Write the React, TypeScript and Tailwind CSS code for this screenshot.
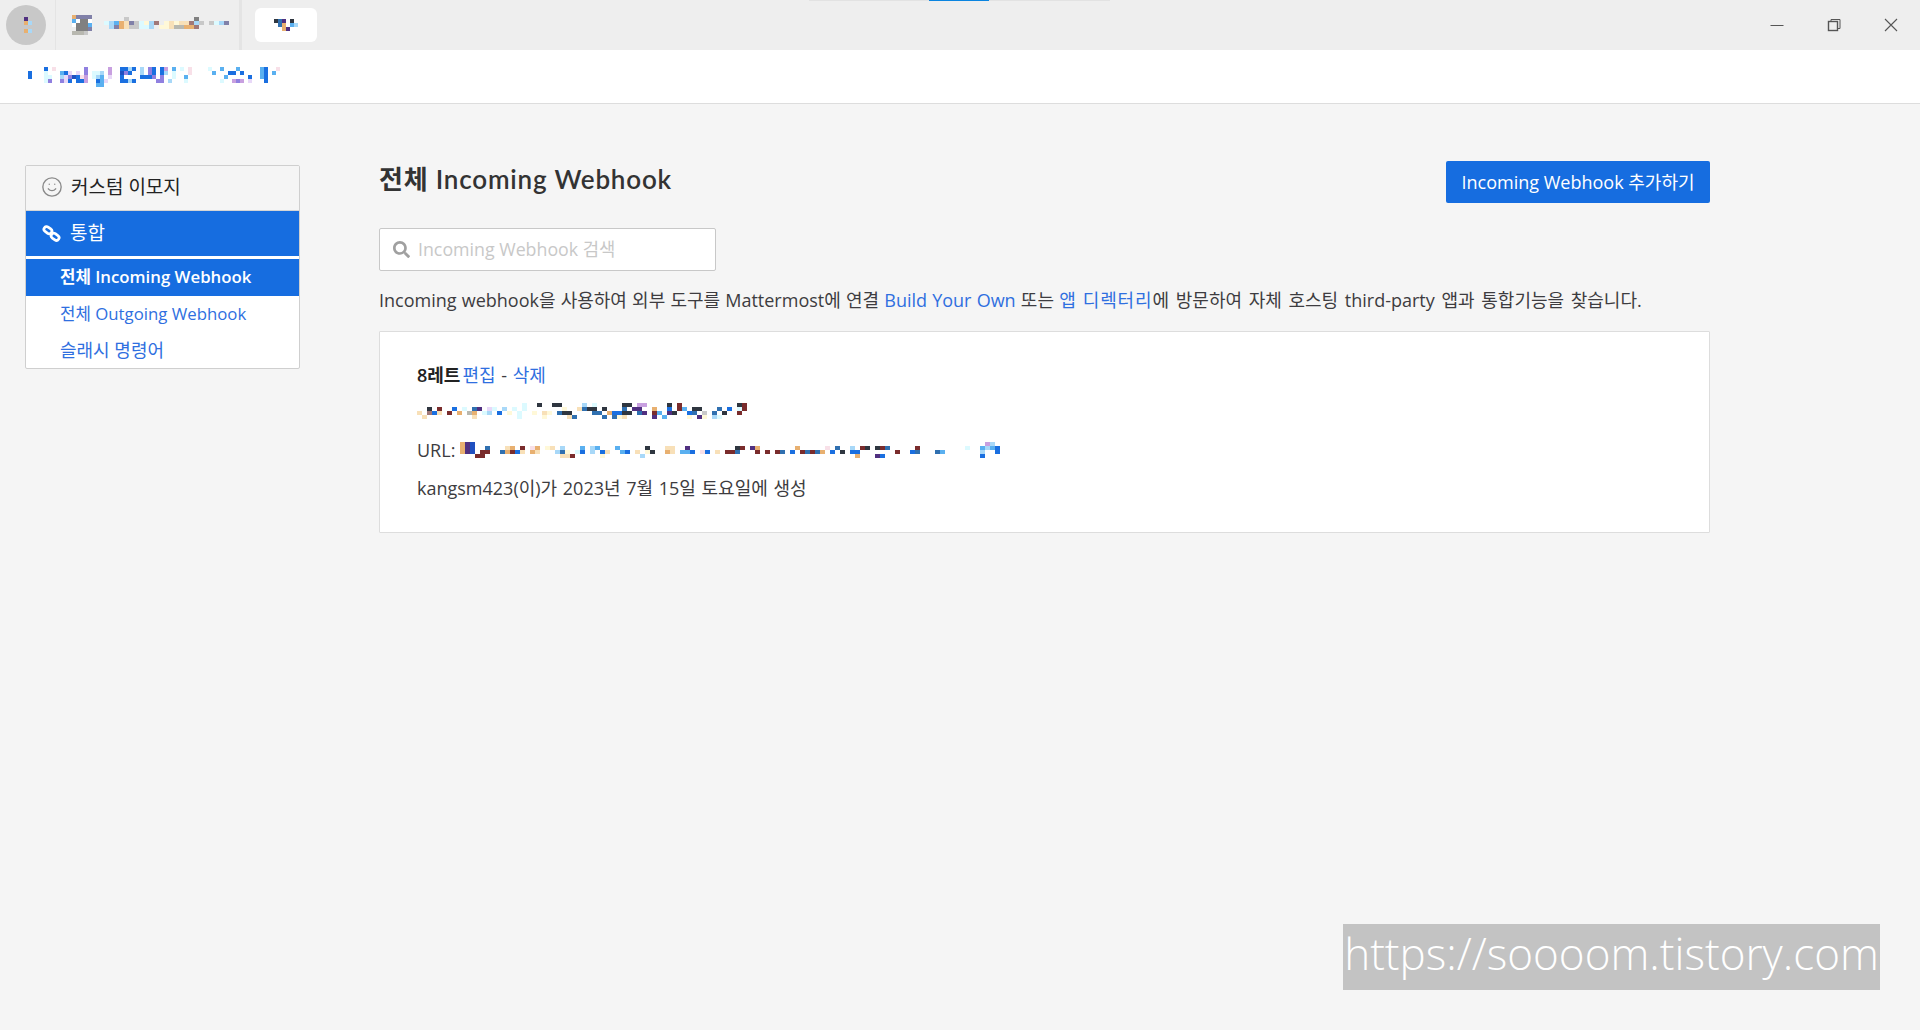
import { FaSearch } from 'react-icons/fa';
import { Smile } from 'lucide-react';

const COLORS: Record<string, string> = {
  b: '#1a6fe0', s: '#5ab0f0', p: '#c8a0e0', l: '#e8d8f8', c: '#dcfaff', k: '#f8e0e8', m: '#9080e0', d: '#2050c0',
  n: '#2f3640', r: '#7a2c2c', o: '#e8b070', y: '#fff8d8', t: '#3070b0', u: '#503080', a: '#a8d8f8', e: '#f8e0b8',
  g: '#c8c8c8', h: '#808080', i: '#b8b8b0', w: '#ffffff', q: '#a07878', v: '#8080a8',
};

// pixelated (blurred out) regions of the screenshot, one char per cell
function Mosaic({ rows, cell = 4, className }: { rows: string[]; cell?: number; className?: string }) {
  const width = Math.max(...rows.map(r => r.length)) * cell;
  return (
    <svg width={width} height={rows.length * 4} shapeRendering="crispEdges" className={className}>
      {rows.flatMap((row, y) =>
        row.split('').map((ch, x) =>
          COLORS[ch] ? <rect key={`${x}-${y}`} x={x * cell} y={y * 4} width={cell} height={4} fill={COLORS[ch]} /> : null
        )
      )}
    </svg>
  );
}

const HEADER_TEXT = [
  '....b.k.......m.....p..bbab.a.mb.bp.s.c.k....c..s...s.....sb..k',
  'b...c...sbl.l.m.cca.p..dmb..a.mb.ba.c...k.....s...bb.b....sb.s.',
  'b...cc..almdbkp.cas.l..b....bbbm.m..c..s.........s.....b..sb...',
  '....cm..mlb.bbp..bsl...bbab.....mm.a...c........c..pmp.l...b...',
  '.................ss.......................................',
];

const WEBHOOK_DESC = [
  '.....................c..n..nn....a.c.....nn.pp....n.r...........nr',
  '..n.r..b.c.tu.lc.a.c.c.......y..etnn.n...t.uu..o..b.rs.nn...t.b.cr',
  'e.qbe.r.o.io.ca.b.y.c..y.ey.tnn....tt.obbnn.tu.rs.un..bt.g.t.n..r',
  '.e.........e........c....y....et.....t.tye.....u.s....y.uy.ac.....',
];

const WEBHOOK_URL = [
  '.oud......................................................................................................pa..',
  '.oud..t...eo.r.ko.ye.a...s.as...s.....n...ee..u.........nr.uo.......o.....k.t..a.rn.nrt.....r.........c..sasb',
  '.oud.rr..torbe.oe...aty.cb.a.be..sb.e.yn..oe.ssb.kb.e.rrt...r.r.rt.b.rtrto.b.n.bb.......r..bt...ts.......a..b',
  '....rr...............eer.....y.......a..........................................o...ub...................b',
];

const SERVER_ICON = [
  '.ovvvv.',
  '.swhhw.',
  '.whhhs.',
  '..hhhv.',
  '.iiig..',
];

const SERVER_NAME = [
  '....g.............h...',
  'casoevgcyaq.yeyeeqag.gcav',
  '.avoeggcca.yyeiiooq.',
  '......................',
];

export default function App() {
  return (
    <div className="relative flex h-[1030px] w-[1920px] flex-col overflow-hidden bg-[#f5f5f5] font-['Open_Sans','Noto_Sans_CJK_KR',sans-serif] text-[18px] text-[#3d3c40]">
      {/* Window title bar */}
      <div className="relative flex h-[50px] shrink-0 items-center bg-[#eeeeee]">
        {/* loading strip */}
        <div className="absolute left-[809px] top-0 h-px w-[301px] bg-[#e2e2e2]" />
        <div className="absolute left-[929px] top-0 h-px w-[60px] bg-[#0a84e0]" />

        <div className="ml-[6px] flex h-[40px] w-[40px] items-center justify-center rounded-full bg-[#c8c8c8]">
          <Mosaic rows={['.u.', '.oa', '...', '.oa']} />
        </div>
        <div className="ml-[9px] h-full w-px bg-[#e4e4e4]" />
        <Mosaic rows={SERVER_ICON} className="ml-[12px]" />
        <Mosaic rows={SERVER_NAME} cell={5} className="ml-[8px]" />
        <div className="ml-[10px] h-full w-[3px] self-end bg-[#e4e4e4]" />
        <div className="ml-[13px] flex h-[34px] w-[62px] items-center justify-center rounded-md bg-white">
          <Mosaic rows={['ntu.n.', '.to.sa', '..ou..']} />
        </div>

        <div className="ml-auto mr-px flex items-center text-[#444444]">
          <button className="flex h-[50px] w-[57px] items-center justify-center">
            <svg width="14" height="14" viewBox="0 0 14 14"><path d="M0.5 7.5h13" stroke="#555" strokeWidth="1" /></svg>
          </button>
          <button className="flex h-[50px] w-[57px] items-center justify-center">
            <svg width="14" height="14" viewBox="0 0 14 14" fill="none" stroke="#555">
              <rect x="1.5" y="3.5" width="9" height="9" strokeWidth="1.4" />
              <path d="M4 3V1.5h9v9h-2" strokeWidth="1" />
            </svg>
          </button>
          <button className="flex h-[50px] w-[57px] items-center justify-center">
            <svg width="14" height="14" viewBox="0 0 14 14"><path d="M1 1l12 12M13 1L1 13" stroke="#555" strokeWidth="1.1" /></svg>
          </button>
        </div>
      </div>

      {/* Team / section header */}
      <div className="flex h-[54px] shrink-0 items-center border-b border-[#dddddd] bg-white pl-[28px]">
        <Mosaic rows={HEADER_TEXT} />
      </div>

      <div className="flex flex-1 pl-[25px] pt-[61px]">
        {/* Sidebar */}
        <div className="h-[204px] w-[275px] shrink-0 overflow-hidden rounded-[2px] border border-[#cfcfcf] bg-white text-[16.8px]">
          <div className="flex h-[45px] items-center border-b border-[#d5d5d5] bg-[#f5f5f5] pb-[2px] pl-[15px] text-[#222222]">
            <Smile size={22} strokeWidth={1.5} className="text-[#8a8a8a]" />
            <span className="ml-[8px] text-[19px]">커스텀 이모지</span>
          </div>
          <div className="flex h-[45px] items-center bg-[#166de0] pl-[16px] text-white">
            <svg width="19" height="17" viewBox="0 0 18 16" fill="none" stroke="white" strokeWidth="2.6">
              <rect x="1.6" y="2.4" width="8" height="5" rx="2.5" transform="rotate(35 5.6 4.9)" />
              <rect x="8.4" y="8.6" width="8" height="5" rx="2.5" transform="rotate(35 12.4 11.1)" />
            </svg>
            <span className="ml-[9px] text-[19px]">통합</span>
          </div>
          <div className="mt-[3px] flex h-[37px] items-center bg-[#166de0] pb-[2px] pl-[34px] font-semibold text-white">전체 Incoming Webhook</div>
          <div className="flex h-[36px] items-center pl-[34px] text-[#2f6fe0]">전체 Outgoing Webhook</div>
          <div className="flex h-[34px] items-center pl-[34px] pt-[2px] text-[18px] text-[#2f6fe0]">슬래시 명령어</div>
        </div>

        {/* Main column */}
        <div className="ml-[79px] w-[1331px]">
          <div className="-mt-[4px] flex items-start justify-between">
            <h1 className="font-['Lato','Noto_Sans_CJK_KR',sans-serif] text-[26px] font-semibold leading-[36px] tracking-[0.8px] text-[#333333]">전체 Incoming Webhook</h1>
            <button className="h-[42px] w-[264px] rounded-[2px] bg-[#166de0] text-white">Incoming Webhook 추가하기</button>
          </div>

          <div className="mt-[25px] flex h-[43px] w-[337px] items-center rounded-[2px] border border-[#c8c8c8] bg-white pl-[13px]">
            <FaSearch className="h-[17px] w-[17px] text-[#a0a0a0]" />
            <span className="ml-[8px] text-[17.8px] text-[#c8c8c8]">Incoming Webhook 검색</span>
          </div>

          <p className="mt-[17px] leading-[24px] whitespace-nowrap [word-spacing:0.5px]">
            Incoming webhook을 사용하여 외부 도구를 Mattermost에 연결 <span className="text-[#2f6fe0]">Build Your Own</span> 또는 <span className="tracking-[0.9px] text-[#2f6fe0]">앱 디렉터리</span><span className="[word-spacing:2px]">에 방문하여 자체 호스팅 third-party 앱과 통합기능을 찾습니다.</span>
          </p>

          <div className="mt-[19px] h-[202px] rounded-[1px] border border-[#dddddd] bg-white pl-[37px] pt-[31px]">
            <div className="leading-[24px] [word-spacing:1px]">
              <span className="mr-[2px] font-semibold text-[#222222]">8레트</span>
              <span className="text-[#2f6fe0]">편집</span> - <span className="text-[#2f6fe0]">삭제</span>
            </div>
            <Mosaic rows={WEBHOOK_DESC} cell={5} className="mt-[16px]" />
            <div className="mt-[19px] flex items-center leading-[24px]">
              URL:
              <Mosaic rows={WEBHOOK_URL} cell={5} />
            </div>
            <div className="mt-[14px] leading-[24px] [word-spacing:1px]">kangsm423(이)가 2023년 7월 15일 토요일에 생성</div>
          </div>
        </div>
      </div>

      {/* Blog watermark */}
      <div className="absolute left-[1343px] top-[924px] flex h-[66px] w-[537px] items-center justify-center bg-[#c3c3c3] pb-[8px] font-['Open_Sans',sans-serif] text-[44px] font-[350] text-white">
        https://soooom.tistory.com
      </div>
    </div>
  );
}
